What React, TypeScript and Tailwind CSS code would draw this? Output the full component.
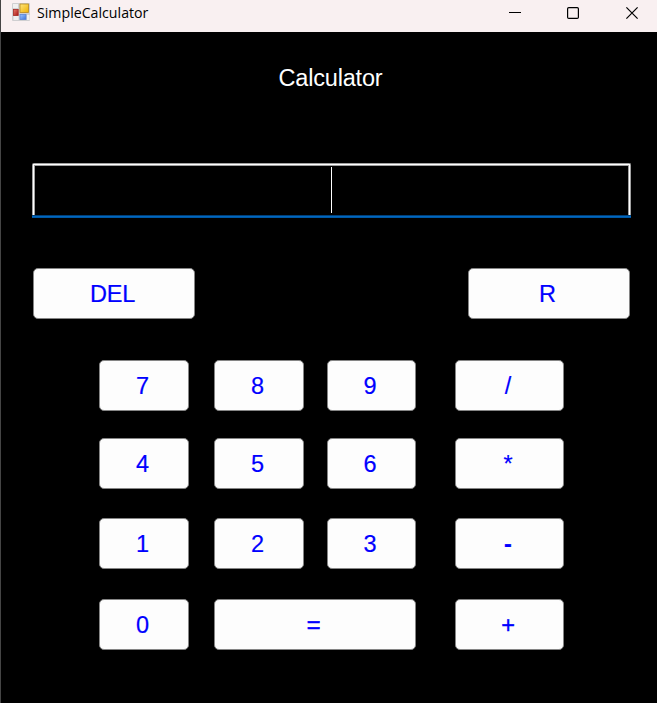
import React from 'react';

type KeyProps = { label: string; className?: string; textClass?: string };

function Key({ label, className = '', textClass = '' }: KeyProps) {
  return (
    <button
      className={`flex h-[51px] shrink-0 items-center justify-center rounded-[5px] border border-[#858585] bg-[#fdfdfd] pt-[3px] pr-[3px] text-[23.5px] leading-none text-[#0000ff] [-webkit-text-stroke:0.2px_#0000ff] ${className}`}
    >
      <span className={textClass}>{label}</span>
    </button>
  );
}

const rows = [
  { keys: ['7', '8', '9', '/'], gap: 'mt-[41px]' },
  { keys: ['4', '5', '6', '*'], gap: 'mt-[27px]' },
  { keys: ['1', '2', '3', '-'], gap: 'mt-[29px]' },
];

function AppIcon() {
  return (
    <svg width="18" height="18" viewBox="0 0 18 18" shapeRendering="auto">
      <defs>
        <linearGradient id="gold" x1="0" y1="0" x2="1" y2="1">
          <stop offset="0" stopColor="#ffe680" />
          <stop offset="1" stopColor="#eeb000" />
        </linearGradient>
        <linearGradient id="red" x1="0" y1="0" x2="1" y2="1">
          <stop offset="0" stopColor="#e77b6e" />
          <stop offset="1" stopColor="#a91512" />
        </linearGradient>
        <linearGradient id="blue" x1="0" y1="0" x2="1" y2="1">
          <stop offset="0" stopColor="#9ec5ff" />
          <stop offset="1" stopColor="#3b74dc" />
        </linearGradient>
      </defs>
      <rect width="18" height="18" rx="1" fill="#cfcfd1" />
      <rect x="1" y="1" width="5" height="4" fill="#f0f0f0" />
      <rect x="1.5" y="13" width="5" height="4" fill="#efefef" />
      <rect x="15" y="12" width="2.5" height="5" fill="#efefef" />
      <rect x="8" y="1" width="8.5" height="8.5" fill="url(#gold)" stroke="#b8891d" strokeWidth="0.8" />
      <rect x="1.4" y="6.5" width="4.8" height="6" fill="url(#red)" stroke="#a72b26" strokeWidth="0.8" />
      <rect x="8" y="11.5" width="6" height="5" fill="url(#blue)" stroke="#5b86d5" strokeWidth="0.8" />
    </svg>
  );
}

export default function App() {
  return (
    <div className="flex h-[703px] w-[657px] flex-col overflow-hidden border-l border-[#454545] bg-black font-['Liberation_Sans',Arial,sans-serif]">
      <header className="flex h-8 shrink-0 items-start bg-[#f9f0f1] pl-[11px] text-black">
        <div className="mt-[3px]">
          <AppIcon />
        </div>
        <span className="mt-[2px] ml-[7px] origin-left scale-x-[0.945] font-['Open_Sans','Noto_Sans',sans-serif] text-[15px] leading-5 whitespace-nowrap">
          SimpleCalculator
        </span>
        <svg className="mt-[6px] mr-[18px] ml-auto" width="130" height="14" viewBox="0 0 130 14" fill="none" stroke="#000" strokeWidth="1.2">
          <path d="M0 6.5H12" strokeWidth="1" />
          <rect x="58.6" y="1.6" width="10.8" height="10.8" rx="1.2" />
          <path d="M117.4 1.4L128.6 12.6M128.6 1.4L117.4 12.6" />
        </svg>
      </header>

      <main className="flex flex-col">
        <h1 className="mt-[33px] h-[26px] pl-[3px] text-center text-[23.5px] leading-[26px] tracking-[-0.2px] text-white">Calculator</h1>

        <div className="mt-[72px] ml-[31px] flex h-[55px] w-[599px] flex-col">
          <div className="h-[52px] rounded-t-[2px] border border-b-0 border-[#a0a0a0]">
            <div className="h-full border border-b-0 border-white">
              <div className="flex h-full justify-center border border-b-0 border-[#a0a0a0] pt-px">
                <span className="h-[46px] w-px bg-white" />
              </div>
            </div>
          </div>
          <div className="h-px bg-[#003f78]" />
          <div className="h-px bg-[#0067c0]" />
          <div className="h-px bg-[#0058a4]" />
        </div>

        <div className="mt-[50px] ml-8 flex w-[597px] justify-between">
          <Key label="DEL" className="w-[162px]" textClass="tracking-[-0.2px]" />
          <Key label="R" className="w-[162px]" />
        </div>

        {rows.map((row) => (
          <div key={row.keys[0]} className={`ml-[98px] flex ${row.gap}`}>
            <Key label={row.keys[0]} className="w-[90px]" />
            <Key label={row.keys[1]} className="ml-[25px] w-[90px]" />
            <Key label={row.keys[2]} className="ml-[23px] w-[89px]" />
            <Key label={row.keys[3]} className="ml-[39px] w-[109px]" textClass={row.keys[3] === '-' ? 'font-bold' : ''} />
          </div>
        ))}

        <div className="mt-[30px] ml-[98px] flex">
          <Key label="0" className="w-[90px]" />
          <Key label="=" className="ml-[25px] w-[202px]" textClass="[-webkit-text-stroke:0.7px_#0000ff]" />
          <Key label="+" className="ml-[39px] w-[109px]" textClass="[-webkit-text-stroke:0.4px_#0000ff]" />
        </div>
      </main>
    </div>
  );
}
